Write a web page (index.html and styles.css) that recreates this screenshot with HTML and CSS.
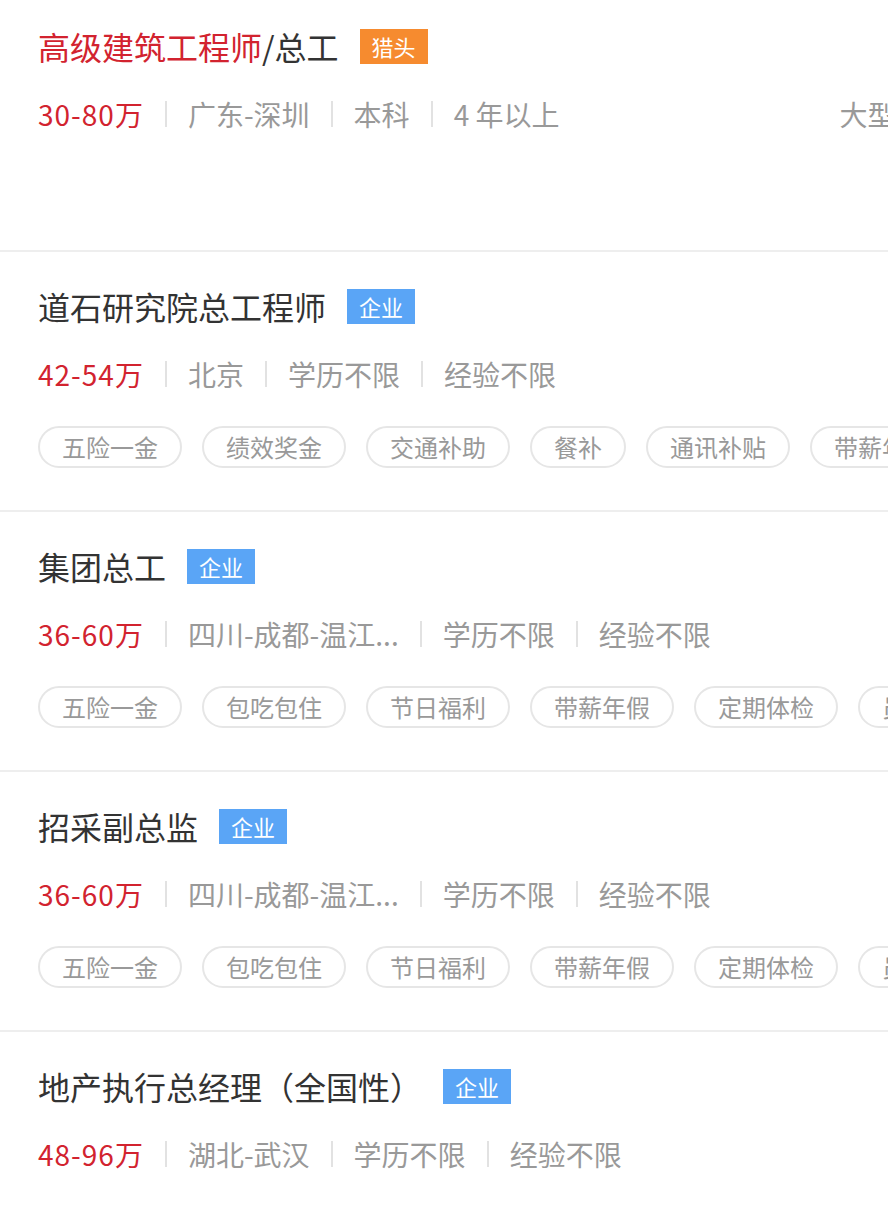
FILE: index.html
```html
<!DOCTYPE html>
<html lang="zh-CN">
<head>
    <meta charset="UTF-8">
    <meta name="viewport" content="width=device-width, initial-scale=1.0">
    <title>职位列表</title>
    <link rel="stylesheet" href="styles.css">
</head>
<body>

    <!-- 职位列表 -->
    <div class="job-list">

        <div class="job job-first">
            <div class="job-title">
                <span class="job-name"><em class="hl">高级建筑工程师</em>/总工</span>
                <span class="badge badge-hunter">猎头</span>
            </div>
            <div class="job-meta">
                <span class="salary">30-80万</span>
                <i class="sep"></i>
                <span>广东-深圳</span>
                <i class="sep"></i>
                <span>本科</span>
                <i class="sep"></i>
                <span>4 年以上</span>
                <span class="job-scale">大型企业</span>
            </div>
            <div class="job-tags"></div>
        </div>

        <div class="job">
            <div class="job-title">
                <span class="job-name">道石研究院总工程师</span>
                <span class="badge badge-company">企业</span>
            </div>
            <div class="job-meta">
                <span class="salary">42-54万</span>
                <i class="sep"></i>
                <span>北京</span>
                <i class="sep"></i>
                <span>学历不限</span>
                <i class="sep"></i>
                <span>经验不限</span>
            </div>
            <div class="job-tags">
                <span class="tag">五险一金</span>
                <span class="tag">绩效奖金</span>
                <span class="tag">交通补助</span>
                <span class="tag">餐补</span>
                <span class="tag">通讯补贴</span>
                <span class="tag">带薪年假</span>
            </div>
        </div>

        <div class="job">
            <div class="job-title">
                <span class="job-name">集团总工</span>
                <span class="badge badge-company">企业</span>
            </div>
            <div class="job-meta">
                <span class="salary">36-60万</span>
                <i class="sep"></i>
                <span>四川-成都-温江...</span>
                <i class="sep"></i>
                <span>学历不限</span>
                <i class="sep"></i>
                <span>经验不限</span>
            </div>
            <div class="job-tags">
                <span class="tag">五险一金</span>
                <span class="tag">包吃包住</span>
                <span class="tag">节日福利</span>
                <span class="tag">带薪年假</span>
                <span class="tag">定期体检</span>
                <span class="tag">员工旅游</span>
            </div>
        </div>

        <div class="job">
            <div class="job-title">
                <span class="job-name">招采副总监</span>
                <span class="badge badge-company">企业</span>
            </div>
            <div class="job-meta">
                <span class="salary">36-60万</span>
                <i class="sep"></i>
                <span>四川-成都-温江...</span>
                <i class="sep"></i>
                <span>学历不限</span>
                <i class="sep"></i>
                <span>经验不限</span>
            </div>
            <div class="job-tags">
                <span class="tag">五险一金</span>
                <span class="tag">包吃包住</span>
                <span class="tag">节日福利</span>
                <span class="tag">带薪年假</span>
                <span class="tag">定期体检</span>
                <span class="tag">员工旅游</span>
            </div>
        </div>

        <div class="job">
            <div class="job-title">
                <span class="job-name">地产执行总经理（全国性）</span>
                <span class="badge badge-company">企业</span>
            </div>
            <div class="job-meta">
                <span class="salary">48-96万</span>
                <i class="sep"></i>
                <span>湖北-武汉</span>
                <i class="sep"></i>
                <span>学历不限</span>
                <i class="sep"></i>
                <span>经验不限</span>
            </div>
            <div class="job-tags">
                <span class="tag">五险一金</span>
                <span class="tag">带薪年假</span>
                <span class="tag">节日福利</span>
            </div>
        </div>

    </div>

</body>
</html>
```

FILE: styles.css
```css
body {
    font-family: 'Noto Sans CJK SC', 'Noto Sans', sans-serif;
    background-color: #fff;
    margin: 0;
    padding: 0;
    color: #333;
    overflow: hidden;
}

/* 列表 */
.job-list {
    margin-top: -8px;
}

.job {
    padding: 36px 38px 42px;
    border-bottom: 2px solid #eee;
}

/* 标题行 */
.job-title {
    display: flex;
    align-items: center;
    height: 36px;
    white-space: nowrap;
}

.job-name {
    font-size: 32px;
    line-height: 36px;
    color: #333;
}

.hl {
    font-style: normal;
    color: #d2232f; /* 高亮红 */
}

.badge {
    margin-left: 21px;
    height: 35px;
    line-height: 35px;
    padding: 0 12px;
    font-size: 22px;
    color: #fff;
}

.badge-hunter {
    background-color: #f68b2f; /* 橙色 */
}

.badge-company {
    background-color: #5aa5f6; /* 蓝色 */
}

/* 薪资 / 地点 / 学历 / 经验 */
.job-meta {
    display: flex;
    align-items: center;
    margin-top: 30px;
    height: 40px;
    font-size: 28px;
    line-height: 40px;
    color: #999;
    white-space: nowrap;
}

.job-meta > * {
    flex-shrink: 0;
}

.salary {
    color: #d2232f;
    letter-spacing: 1px;
}

.sep {
    width: 2px;
    height: 26px;
    margin: 0 21px;
    background-color: #e2e2e2;
}

.job-scale {
    margin-left: 280px;
}

/* 福利标签 */
.job-tags {
    display: flex;
    gap: 20px;
    margin-top: 32px;
    height: 42px;
    white-space: nowrap;
}

.tag {
    flex-shrink: 0;
    box-sizing: border-box;
    height: 42px;
    line-height: 38px;
    padding: 0 22px;
    border: 2px solid #e6e6e6;
    border-radius: 21px;
    font-size: 24px;
    color: #999;
}
```
